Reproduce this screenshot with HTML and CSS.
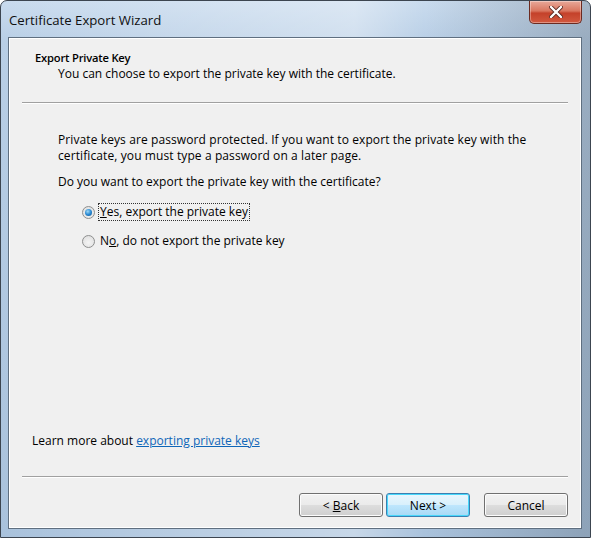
FILE: index.html
```html
<!DOCTYPE html>
<html lang="en">
<head>
    <meta charset="UTF-8">
    <meta name="viewport" content="width=device-width, initial-scale=1.0">
    <title>Certificate Export Wizard</title>
    <link rel="stylesheet" href="styles.css">
</head>
<body>
    <div class="window">
        <div class="titlebar">
            <span class="title">Certificate Export Wizard</span>
            <button class="close-btn" aria-label="Close">
                <svg width="14" height="12" viewBox="0 0 14 12">
                    <path d="M2 1 L12 11 M12 1 L2 11" stroke="#5a2a22" stroke-width="4" stroke-linecap="round"/>
                    <path d="M2 1 L12 11 M12 1 L2 11" stroke="#ffffff" stroke-width="2.4" stroke-linecap="round"/>
                </svg>
            </button>
        </div>

        <div class="client">
            <div class="header">
                <div class="header-title">Export Private Key</div>
                <div class="header-sub">You can choose to export the private key with the certificate.</div>
            </div>
            <div class="separator"></div>

            <div class="content">
                <p class="para">Private keys are password protected. If you want to export the private key with the certificate, you must type a password on a later page.</p>
                <p class="question">Do you want to export the private key with the certificate?</p>

                <div class="options">
                    <label class="option">
                        <span class="radio checked"></span>
                        <span class="option-text focused"><u>Y</u>es, export the private key</span>
                    </label>
                    <label class="option">
                        <span class="radio"></span>
                        <span class="option-text">N<u>o</u>, do not export the private key</span>
                    </label>
                </div>
            </div>

            <div class="learn">Learn more about <a href="#">exporting private keys</a></div>
            <div class="separator bottom"></div>

            <div class="button-row">
                <button class="btn">&lt; <u>B</u>ack</button>
                <button class="btn default">Next &gt;</button>
                <button class="btn cancel">Cancel</button>
            </div>
        </div>
    </div>
</body>
</html>
```

FILE: styles.css
```css
* {
    margin: 0;
    padding: 0;
    box-sizing: border-box;
}

body {
    background: #ffffff;
    font-family: 'Open Sans', 'Noto Sans', sans-serif;
    font-size: 12px;
    color: #000;
}

.window {
    width: 591px;
    height: 538px;
    display: flex;
    flex-direction: column;
    padding: 0 8px 8px 7px;
    border: 1px solid #3c4550;
    border-radius: 7px 7px 0 0;
    background:
        linear-gradient(90deg, rgba(255,255,255,0) 0, rgba(255,255,255,0.35) 60%, rgba(255,255,255,0) 72%, rgba(60,70,80,0.25) 99%),
        linear-gradient(180deg, #c9dbee 0, #b9cfe6 40px, #a9c2dc 100%);
}

.titlebar {
    height: 36px;
    display: flex;
    justify-content: space-between;
    align-items: flex-start;
}

.title {
    padding: 9px 0 0 1px;
    font-size: 13.2px;
    line-height: 20px;
    color: #101010;
}

.close-btn {
    width: 53px;
    height: 23px;
    border: 1px solid #6b2a20;
    border-top: none;
    border-radius: 0 0 5px 5px;
    background: linear-gradient(180deg, #e8a99a 0, #d9765f 45%, #c4412a 55%, #d2593f 100%);
    display: flex;
    align-items: center;
    justify-content: center;
    box-shadow: inset 0 0 0 1px rgba(255,255,255,0.35);
}

.client {
    flex: 1;
    display: flex;
    flex-direction: column;
    background: #f0f0f0;
    border: 1px solid #5f6f80;
    box-shadow: inset 0 0 0 1px #ffffff;
}

.header {
    padding: 12px 26px 20px;
    line-height: 16px;
}

.header-title {
    font-weight: 600;
    font-size: 11.2px;
    letter-spacing: -0.2px;
}

.header-sub {
    padding-left: 23px;
}

.separator {
    height: 2px;
    margin: 0 13px;
    border-top: 1px solid #a0a0a0;
    border-bottom: 1px solid #ffffff;
}

.content {
    flex: 1;
    padding: 28px 49px 0;
    line-height: 16px;
}

.para {
    max-width: 480px;
    letter-spacing: 0.1px;
}

.question {
    margin-top: 10px;
}

.options {
    margin-top: 13px;
    padding-left: 24px;
    display: flex;
    flex-direction: column;
    gap: 11px;
}

.option {
    display: flex;
    align-items: center;
    gap: 3px;
    height: 18px;
}

.radio {
    width: 13px;
    height: 13px;
    border-radius: 50%;
    border: 1px solid #8e8f8f;
    background: radial-gradient(circle at 50% 60%, #f4f4f4 0, #dcdcdc 100%);
    display: flex;
    align-items: center;
    justify-content: center;
}

.radio.checked::after {
    content: "";
    width: 7px;
    height: 7px;
    border-radius: 50%;
    background: radial-gradient(circle at 40% 35%, #9fd9f5 0, #2a8ad4 50%, #0b4f8a 100%);
}

.option-text {
    padding: 0 1px;
    line-height: 16px;
    border: 1px solid transparent;
}

.option-text.focused {
    border: 1px dotted #333;
}

.learn {
    padding: 0 23px;
    line-height: 16px;
}

.learn a {
    color: #0f66b8;
}

.separator.bottom {
    margin-top: 27px;
}

.button-row {
    display: flex;
    justify-content: flex-end;
    padding: 15px 13px 11px;
    gap: 3px;
}

.btn {
    width: 84px;
    height: 24px;
    font-family: inherit;
    font-size: 12px;
    color: #000;
    border: 1px solid #707070;
    border-radius: 3px;
    background: linear-gradient(180deg, #f2f2f2 0, #ebebeb 48%, #dddddd 52%, #cfcfcf 100%);
    box-shadow: inset 0 0 0 1px #fcfcfc;
}

.btn.default {
    border-color: #3c7fb1;
    background: linear-gradient(180deg, #eaf6fd 0, #d9f0fc 48%, #bee6fd 52%, #a7d9f5 100%);
    box-shadow: inset 0 0 0 1px #48d8fb;
}

.btn.cancel {
    margin-left: 11px;
}
```
